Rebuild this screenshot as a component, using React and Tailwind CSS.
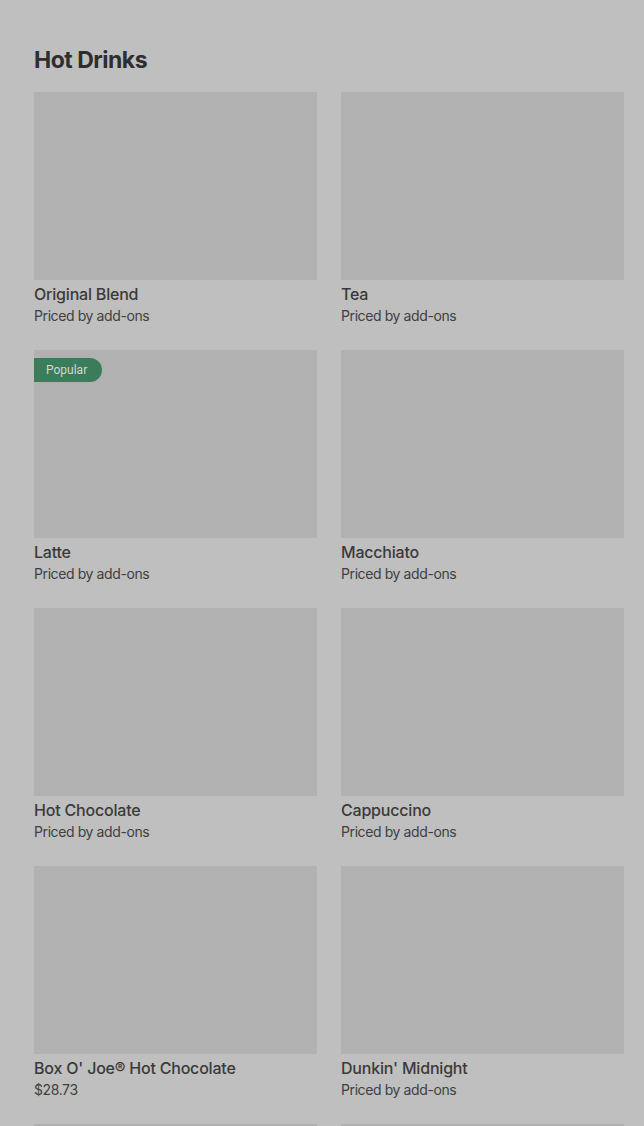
import React from 'react';

const items = [
    { name: "Original Blend", price: "Priced by add-ons" },
    { name: "Tea", price: "Priced by add-ons" },
    { name: "Latte", price: "Priced by add-ons", popular: true },
    { name: "Macchiato", price: "Priced by add-ons" },
    { name: "Hot Chocolate", price: "Priced by add-ons" },
    { name: "Cappuccino", price: "Priced by add-ons" },
    { name: "Box O' Joe® Hot Chocolate", price: "$28.73" },
    { name: "Dunkin' Midnight", price: "Priced by add-ons" },
];

function ItemCard({ item }) {
    return (
        <div className="flex flex-col">
            <div className="relative h-[188px] w-full bg-[#b1b1b1]">
                {item.popular && (
                    <span className="absolute left-0 top-[8px] h-[24px] pl-[12px] pr-[15px] flex items-center rounded-r-full bg-[#3b7c5b] text-[#c9dccf] text-[12px] leading-none font-['Roboto',sans-serif]">
                        Popular
                    </span>
                )}
            </div>
            <div className="pt-[3px] text-[16px] leading-[22px] tracking-[-0.2px] font-medium text-[#3a3a3a]">
                {item.name}
            </div>
            <div className="text-[14px] leading-[22px] tracking-[-0.4px] text-[#404040]">
                {item.price}
            </div>
        </div>
    );
}

function App() {
    return (
        <div className="w-full h-[1126px] overflow-hidden bg-[#bfbfbf] font-['Inter',sans-serif]">
            <div className="pl-[34px] pr-[20px] pt-[44px]">
                <h2 className="font-bold text-[23px] leading-[32px] tracking-[-0.5px] text-[#2e2e2e]">
                    Hot Drinks
                </h2>
                <div className="mt-[16px] grid grid-cols-2 gap-x-[24px] gap-y-[23px]">
                    {items.map((item) => (
                        <ItemCard key={item.name} item={item} />
                    ))}
                    {/* next row, only its top edge shows */}
                    <div className="h-[188px] bg-[#b1b1b1]" />
                    <div className="h-[188px] bg-[#b1b1b1]" />
                </div>
            </div>
        </div>
    );
}

export default App;
